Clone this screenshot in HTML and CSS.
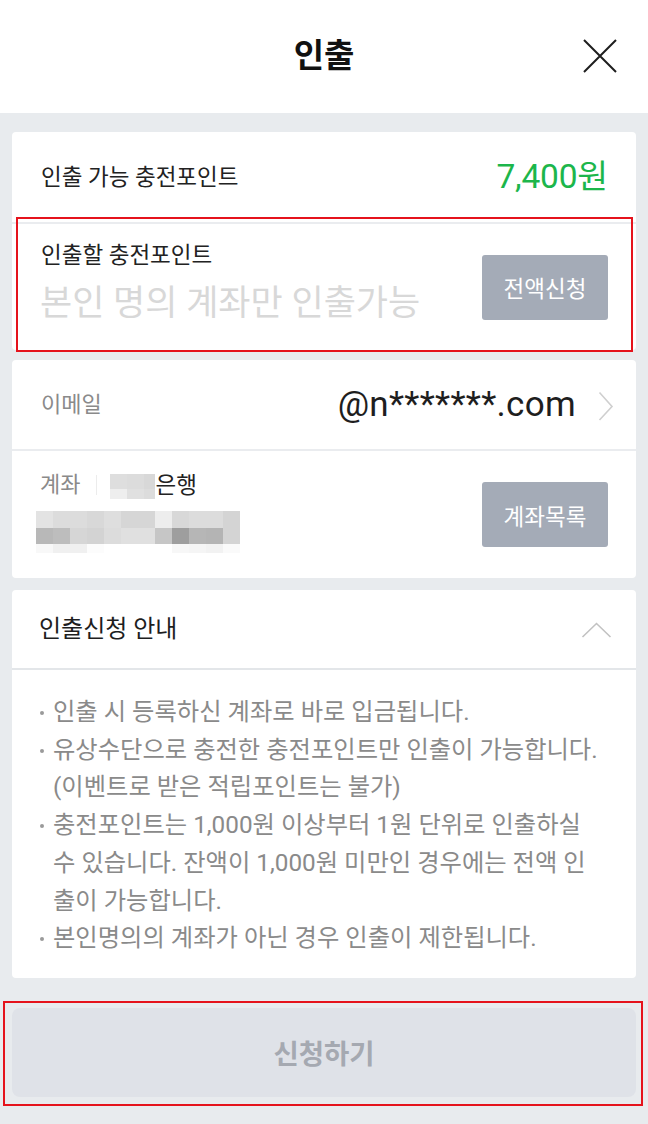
FILE: index.html
```html
<!DOCTYPE html>
<html lang="ko">
<head>
<meta charset="utf-8">
<title>인출</title>
<link rel="stylesheet" href="styles.css">
</head>
<body>
<div class="page">
  <header class="topbar">
    <span class="spacer"></span>
    <h1 class="title">인출</h1>
    <button class="close" aria-label="닫기">
      <svg width="34" height="34" viewBox="0 0 34 34"><path d="M1 1L33 33M33 1L1 33" fill="none" stroke="#1e1e1e" stroke-width="2"/></svg>
    </button>
  </header>

  <main class="content">
    <section class="card card-amount">
      <div class="row row-available">
        <span class="label">인출 가능 충전포인트</span>
        <span class="amount">7,400원</span>
      </div>
      <div class="row row-input">
        <div class="input-col">
          <div class="label">인출할 충전포인트</div>
          <div class="placeholder">본인 명의 계좌만 인출가능</div>
        </div>
        <button class="btn-gray">전액신청</button>
      </div>
    </section>

    <section class="card card-account">
      <div class="row row-email">
        <span class="label-gray">이메일</span>
        <span class="email-wrap">
          <span class="email">@n*******.com</span>
          <svg class="chev-right" width="16" height="30" viewBox="0 0 16 30"><path d="M1.5 1.5L14 15.5L1.5 29" fill="none" stroke="#cfcfcf" stroke-width="1.6"/></svg>
        </span>
      </div>
      <div class="row row-bank">
        <div class="bank-col">
          <div class="bank-line">
            <span class="label-gray">계좌</span>
            <span class="vsep"></span>
            <span class="pix-bank">
              <i class="c-de"></i><i class="c-dc"></i><i class="c-d8"></i>
              <i class="c-ee"></i><i class="c-e0"></i><i class="c-dc"></i>
            </span>
            <span class="bank-name">은행</span>
          </div>
          <div class="pix-acct">
            <i class="c-e3"></i><i class="c-dc"></i><i class="c-dc"></i><i class="c-d8"></i><i class="c-de"></i><i class="c-d6"></i><i class="c-d6"></i><i class="c-ed"></i><i class="c-d8"></i><i class="c-dc"></i><i class="c-dc"></i><i class="c-d4"></i>
            <i class="c-b8"></i><i class="c-bd"></i><i class="c-d6"></i><i class="c-d3"></i><i class="c-dc"></i><i class="c-e0"></i><i class="c-e0"></i><i class="c-c6"></i><i class="c-9e"></i><i class="c-b6"></i><i class="c-b4"></i><i class="c-d4"></i>
            <i class="c-f8"></i><i class="c-f0"></i><i class="c-f0"></i><i class="c-fc"></i><i class="c-ff"></i><i class="c-ff"></i><i class="c-ff"></i><i class="c-ff"></i><i class="c-f7"></i><i class="c-f5"></i><i class="c-f2"></i><i class="c-fa"></i>
          </div>
        </div>
        <button class="btn-gray">계좌목록</button>
      </div>
    </section>

    <section class="card card-guide">
      <div class="guide-head">
        <span class="guide-title">인출신청 안내</span>
        <svg class="chev-up" width="32" height="18" viewBox="0 0 32 18"><path d="M1.5 16L15.5 2.5L29.5 16" fill="none" stroke="#c2c2c2" stroke-width="1.6"/></svg>
      </div>
      <ul class="guide-list">
        <li><span class="dot"></span><span class="txt">인출 시 등록하신 계좌로 바로 입금됩니다.</span></li>
        <li><span class="dot"></span><span class="txt">유상수단으로 충전한 충전포인트만 인출이 가능합니다.<br>(이벤트로 받은 적립포인트는 불가)</span></li>
        <li><span class="dot"></span><span class="txt">충전포인트는 1,000원 이상부터 1원 단위로 인출하실<br>수 있습니다. 잔액이 1,000원 미만인 경우에는 전액 인<br>출이 가능합니다.</span></li>
        <li><span class="dot"></span><span class="txt">본인명의의 계좌가 아닌 경우 인출이 제한됩니다.</span></li>
      </ul>
    </section>
  </main>

  <footer class="footer">
    <div class="submit-frame">
      <button class="submit">신청하기</button>
    </div>
  </footer>
</div>
</body>
</html>
```

FILE: styles.css
```css
* { box-sizing: border-box; }

html, body {
  margin: 0;
  padding: 0;
}

body {
  background: #e8ebee;
  font-family: Roboto, "Noto Sans CJK KR", "Noto Sans", sans-serif;
  color: #222;
}

.page {
  width: 648px;
  height: 1124px;
  overflow: hidden;
}

button {
  font-family: inherit;
  border: 0;
  padding: 0;
  margin: 0;
  cursor: pointer;
}

/* header */
.topbar {
  height: 113px;
  background: #fff;
  display: grid;
  grid-template-columns: 1fr auto 1fr;
  align-items: center;
}

.title {
  margin: 0;
  font-size: 33px;
  font-weight: 700;
  color: #111;
  line-height: 1;
  padding-bottom: 2px;
}

.close {
  justify-self: end;
  margin-right: 31px;
  background: none;
  width: 34px;
  height: 34px;
  display: flex;
  margin-bottom: 1px;
}

/* main */
.content {
  padding: 19px 12px 0;
  display: flex;
  flex-direction: column;
  gap: 10px;
}

.card {
  background: #fff;
  border-radius: 4px;
}

.row {
  display: flex;
  align-items: center;
  justify-content: space-between;
}

.label {
  font-size: 22.5px;
  line-height: 28px;
  color: #222;
}

.label-gray {
  font-size: 22px;
  line-height: 28px;
  color: #8a8a8a;
}

/* card 1 */
.card-amount {
  position: relative;
}

.card-amount::after {
  content: "";
  position: absolute;
  left: 4px;
  right: 3px;
  top: 85px;
  bottom: -2px;
  border: 2px solid #e5131c;
  pointer-events: none;
}

.row-available {
  height: 92px;
  padding: 0 28px 0 29px;
  border-bottom: 2px solid #eaecef;
}

.amount {
  font-size: 33.5px;
  color: #1cb64b;
  line-height: 1;
  letter-spacing: -0.2px;
}

.row-input {
  height: 126px;
  padding: 0 28px 0 28px;
}

.input-col {
  display: flex;
  flex-direction: column;
  align-self: flex-start;
  padding-top: 17px;
}

.input-col .label {
  margin-left: 1px;
}

.placeholder {
  margin-top: 13px;
  font-size: 35px;
  line-height: 44px;
  color: #d8d8d8;
}

.btn-gray {
  width: 126px;
  height: 65px;
  background: #a4abb7;
  color: #fff;
  font-size: 22.5px;
  border-radius: 3px;
}

/* card 2 */
.row-email {
  height: 91px;
  padding: 0 22px 0 29px;
  border-bottom: 2px solid #eaecef;
}

.email-wrap {
  display: flex;
  align-items: center;
  gap: 22px;
}

.email {
  font-size: 35px;
  color: #1e1e1e;
  line-height: 1;
  letter-spacing: 0.3px;
}

.chev-right {
  display: block;
  margin-top: 3px;
}

.row-bank {
  height: 127px;
  padding: 0 28px 0 28px;
}

.bank-col {
  align-self: flex-start;
  padding-top: 20px;
  display: flex;
  flex-direction: column;
}

.bank-line {
  display: flex;
  align-items: center;
  height: 28px;
}

.vsep {
  width: 1px;
  height: 20px;
  background: #ececec;
  margin: 0 13px 0 16px;
}

.pix-bank {
  display: grid;
  grid-template-columns: 17px 17px 11px;
  grid-template-rows: 15px 10px;
  margin-top: 2px;
}

.pix-bank i, .pix-acct i { display: block; }

.bank-name {
  font-size: 22.5px;
  color: #222;
  line-height: 28px;
}

.pix-acct {
  margin-top: 12px;
  margin-left: -4px;
  display: grid;
  grid-template-columns: repeat(12, 17px);
  grid-template-rows: 17px 16px 9px;
}

.c-9e { background: #9e9e9e; }
.c-b4 { background: #b4b4b4; }
.c-b6 { background: #b6b6b6; }
.c-b8 { background: #b8b8b8; }
.c-bd { background: #bdbdbd; }
.c-c6 { background: #c6c6c6; }
.c-d3 { background: #d3d3d3; }
.c-d4 { background: #d4d4d4; }
.c-d6 { background: #d6d6d6; }
.c-d8 { background: #d8d8d8; }
.c-dc { background: #dcdcdc; }
.c-de { background: #dedede; }
.c-e0 { background: #e0e0e0; }
.c-e3 { background: #e3e3e3; }
.c-ed { background: #ededed; }
.c-ee { background: #eeeeee; }
.c-f0 { background: #f0f0f0; }
.c-f2 { background: #f2f2f2; }
.c-f5 { background: #f5f5f5; }
.c-f7 { background: #f7f7f7; }
.c-f8 { background: #f8f8f8; }
.c-fa { background: #fafafa; }
.c-fc { background: #fcfcfc; }
.c-ff { background: #ffffff; }

/* card 3 */
.card-guide {
  margin-top: 2px;
}

.guide-head {
  height: 80px;
  display: flex;
  align-items: center;
  justify-content: space-between;
  padding: 0 23px 0 27px;
  border-bottom: 2px solid #e3e6e9;
}

.guide-title {
  font-size: 24px;
  color: #1e1e1e;
  line-height: 28px;
}

.chev-up {
  display: block;
  margin-top: 2px;
}

.guide-list {
  list-style: none;
  margin: 0;
  padding: 23px 10px 21px 28px;
}

.guide-list li {
  display: flex;
  font-size: 24.3px;
  line-height: 37.7px;
  color: #8a8a8a;
}

.dot {
  width: 13px;
  flex: none;
  position: relative;
}

.dot::before {
  content: "";
  position: absolute;
  left: 0;
  top: 18px;
  width: 4px;
  height: 4px;
  border-radius: 50%;
  background: #9a9a9a;
}

.txt {
  white-space: nowrap;
}

/* footer */
.footer {
  padding: 23px 5px 0 3px;
}

.submit-frame {
  border: 2px solid #e5131c;
  padding: 5px 5px 7px 7px;
}

.submit {
  display: block;
  width: 100%;
  height: 89px;
  background: #dfe2e8;
  border-radius: 8px;
  color: #a5a9b1;
  font-size: 27.5px;
  font-weight: 700;
}
```
